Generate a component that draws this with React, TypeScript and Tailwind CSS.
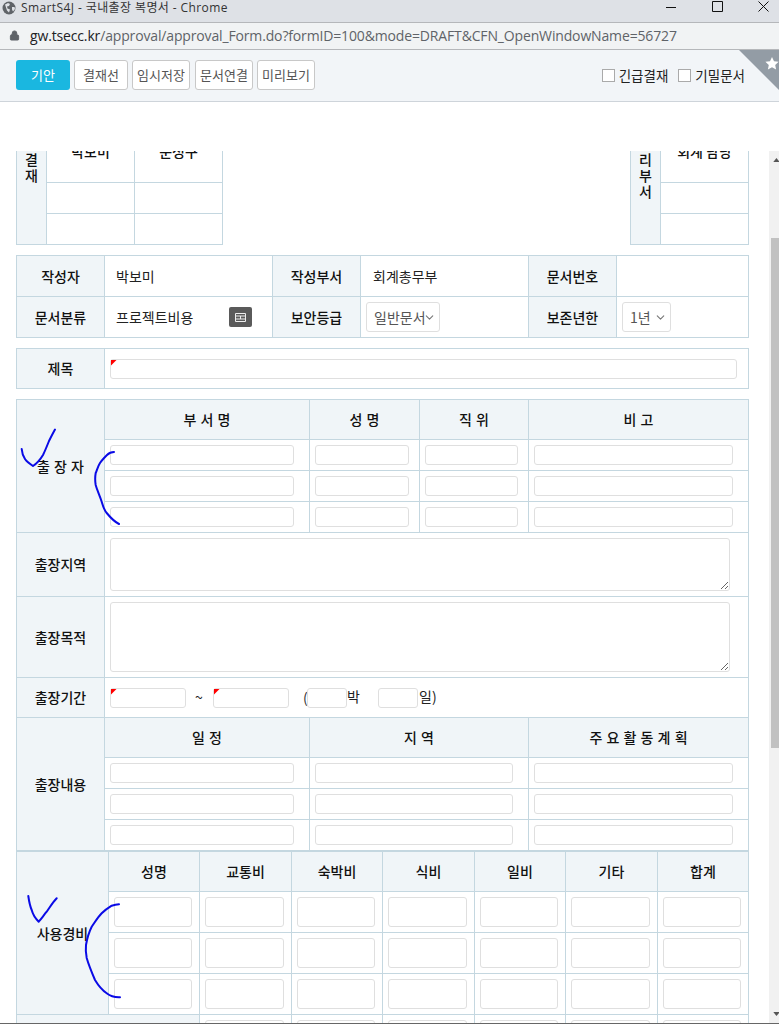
import { ChevronDown, Lock } from 'lucide-react'

const CELL = 'border border-[#c4d7e0]'
const LABEL = `${CELL} bg-[#f0f5f8] text-center font-medium text-[14px] text-[#111] [word-spacing:1px]`
const INPUT = 'block h-[20px] rounded-[3px] border border-[#dfdfdf] bg-white'

function Field({ w, required = false, className = '' }: { w: string; required?: boolean; className?: string }) {
  return (
    <span className={`relative block ${w} ${className}`}>
      <input className={`${INPUT} w-full`} />
      {required && <span className="absolute left-px top-px h-[6px] w-[6px] bg-[#f00] [clip-path:polygon(0_0,100%_0,0_100%)]" />}
    </span>
  )
}

function Picker({ value, w }: { value: string; w: string }) {
  return (
    <span className={`relative block ${w}`}>
      <select className="block h-[30px] w-full appearance-none rounded-[3px] border border-[#dfdfdf] bg-white pl-[7px] text-[14px] text-[#555]">
        <option>{value}</option>
      </select>
      <ChevronDown className="absolute right-[4px] top-[9px] h-[13px] w-[13px] text-[#777]" />
    </span>
  )
}

function Stroke({ d }: { d: string }) {
  return <path d={d} fill="none" stroke="#0a0ae6" strokeWidth="2" strokeLinecap="round" strokeLinejoin="round" />
}

function ApprovalBox({ label, names, cols }: { label: string; names: string[]; cols: string[] }) {
  return (
    <table className="table-fixed border-collapse" style={{ width: 30 + cols.reduce((a, c) => a + parseInt(c), 0) + 1 }}>
      <colgroup>
        <col className="w-[30px]" />
        {cols.map((c, i) => (
          <col key={i} style={{ width: parseInt(c) }} />
        ))}
      </colgroup>
      <tbody>
        <tr className="h-[28px]">
          <td rowSpan={4} className={`${LABEL} whitespace-pre-line px-[6px] pb-[3px] leading-[16px]`}>
            {label}
          </td>
          {names.map((_, i) => (
            <td key={i} className={CELL} />
          ))}
        </tr>
        <tr className="h-[62px]">
          {names.map((n) => (
            <td key={n} className={`${CELL} text-center text-[14px] font-medium text-[#111]`}>
              {n}
            </td>
          ))}
        </tr>
        {[0, 1].map((r) => (
          <tr key={r} className="h-[31px]">
            {names.map((n) => (
              <td key={n} className={CELL} />
            ))}
          </tr>
        ))}
      </tbody>
    </table>
  )
}

const TRIP_ROWS = [0, 1, 2]
const EXPENSE_HEADS = ['성명', '교통비', '숙박비', '식비', '일비', '기타', '합계']
const EXPENSE_COLS = [92, 91, 92, 91, 92, 91, 92, 91]

export default function App() {
  return (
    <div className="flex h-[1024px] w-[779px] flex-col overflow-hidden bg-white font-['Noto_Sans_CJK_KR',sans-serif] text-[#222]">
      {/* 창 제목 */}
      <div className="relative flex h-[23px] shrink-0 items-center border-b border-[#b5b7ba] bg-[#dee1e6] pl-[2px]">
        <svg viewBox="0 0 14 14" className="h-[14px] w-[14px] shrink-0 -translate-y-[3px]">
          <circle cx="7" cy="7" r="6.5" fill="#5f6368" />
          <path d="M3 3.5l3-1.5 2 1-1 2-2 .5.5 2 2.5 1-1 3-2-2-1-3zM10 6l2.5 0 .5 2-2 2.5-1-2z" fill="#dee1e6" />
        </svg>
        <span className="ml-[5px] -translate-y-[3px] font-['Open_Sans','Noto_Sans_CJK_KR',sans-serif] text-[12px] tracking-[0.4px] text-[#333]">
          SmartS4J - 국내출장 복명서 - Chrome
        </span>
        <svg viewBox="0 0 103 11" className="absolute left-[666px] top-[1px] h-[11px] w-[103px]" fill="none" stroke="#111">
          <path d="M0 6.5h10M46.5.5h10v10h-10zM92.5.5l10 10M102.5.5l-10 10" />
        </svg>
      </div>

      {/* 주소창 */}
      <div className="flex h-[27px] shrink-0 items-center border-b border-[#b5b7ba] bg-[#f1f3f4] pl-[9px]">
        <Lock className="h-[11px] w-[11px] -translate-y-px fill-[#5f6368] text-[#5f6368]" />
        <span className="ml-[10px] -translate-y-px font-['Open_Sans',sans-serif] text-[14px] tracking-[-0.15px] text-[#5f6368]">
          <span className="text-[#202124]">gw.tsecc.kr</span>
          /approval/approval_Form.do?formID=100&amp;mode=DRAFT&amp;CFN_OpenWindowName=56727
        </span>
      </div>

      {/* 버튼 영역 */}
      <div className="relative flex h-[52px] shrink-0 items-center gap-[4px] border-b border-[#ced4da] bg-[#f2f5f8] pl-[16px] pb-[1px] text-[13px]">
        <button className="h-[30px] w-[54px] rounded-[3px] bg-[#1ab7e0] text-white">기안</button>
        <button className="h-[30px] w-[54px] rounded-[3px] border border-[#c8c8c8] bg-white text-[#555]">결재선</button>
        <button className="h-[30px] w-[58px] rounded-[3px] border border-[#c8c8c8] bg-white text-[#555]">임시저장</button>
        <button className="ml-px h-[30px] w-[58px] rounded-[3px] border border-[#c8c8c8] bg-white text-[#555]">문서연결</button>
        <button className="h-[30px] w-[58px] rounded-[3px] border border-[#c8c8c8] bg-white text-[#555]">미리보기</button>
        <div className="ml-auto mr-[34px] flex items-center text-[13.5px] text-[#222]">
          <span className="h-[13px] w-[13px] border border-[#aaa] bg-white" />
          <span className="ml-[4px]">긴급결재</span>
          <span className="ml-[10px] h-[13px] w-[13px] border border-[#aaa] bg-white" />
          <span className="ml-[4px]">기밀문서</span>
        </div>
        <svg viewBox="0 0 40 40" className="absolute right-0 top-0 h-[40px] w-[40px]">
          <path d="M0 0H40V40z" fill="#939ca5" />
          <path d="M33 7l2 4.2 4.6.6-3.4 3.2.9 4.6-4.1-2.3-4.1 2.3.9-4.6-3.4-3.2 4.6-.6z" fill="#fff" />
        </svg>
      </div>

      <div className="h-[49px] shrink-0" />

      <div className="flex min-h-0 flex-1">
        <div className="relative min-w-0 flex-1 overflow-hidden">
          <div className="-mt-[59px] ml-[16px] w-[733px]">
            {/* 결재선 */}
            <div className="flex items-start justify-between">
              <ApprovalBox label={'결\n재'} names={['박보미', '문성구']} cols={['88', '88']} />
              <ApprovalBox label={'관\n리\n부\n서'} names={['회계 담당']} cols={['88']} />
            </div>

            {/* 문서 정보 */}
            <table className="mt-[10px] w-[733px] table-fixed border-collapse text-[14px]">
              <colgroup>
                <col className="w-[88px]" />
                <col className="w-[168px]" />
                <col className="w-[88px]" />
                <col className="w-[168px]" />
                <col className="w-[88px]" />
                <col className="w-[132px]" />
              </colgroup>
              <tbody>
                <tr className="h-[41px]">
                  <td className={LABEL}>작성자</td>
                  <td className={`${CELL} pl-[11px]`}>박보미</td>
                  <td className={LABEL}>작성부서</td>
                  <td className={`${CELL} pl-[12px]`}>회계총무부</td>
                  <td className={LABEL}>문서번호</td>
                  <td className={CELL} />
                </tr>
                <tr className="h-[41px]">
                  <td className={LABEL}>문서분류</td>
                  <td className={`${CELL} pl-[11px]`}>
                    <div className="flex items-center justify-between pr-[20px]">
                      프로젝트비용
                      <button className="flex h-[20px] w-[23px] items-center justify-center rounded-[2px] bg-[#5a5a5a]">
                        <svg viewBox="0 0 11 9" className="h-[9px] w-[11px]">
                          <path d="M.5.5h10v8H.5zM.5 3h10M.5 6h10M5.5 3v3" fill="none" stroke="#eee" />
                        </svg>
                      </button>
                    </div>
                  </td>
                  <td className={LABEL}>보안등급</td>
                  <td className={`${CELL} pl-[5px]`}>
                    <Picker value="일반문서" w="w-[74px]" />
                  </td>
                  <td className={LABEL}>보존년한</td>
                  <td className={`${CELL} pl-[5px]`}>
                    <Picker value="1년" w="w-[49px]" />
                  </td>
                </tr>
              </tbody>
            </table>

            {/* 제목 */}
            <table className="mt-[10px] w-[733px] table-fixed border-collapse">
              <colgroup>
                <col className="w-[88px]" />
                <col className="w-[644px]" />
              </colgroup>
              <tbody>
                <tr className="h-[40px]">
                  <td className={LABEL}>제목</td>
                  <td className={`${CELL} pl-[5px]`}>
                    <Field w="w-[627px]" required />
                  </td>
                </tr>
              </tbody>
            </table>

            {/* 출장 내역 */}
            <table className="mt-[10px] w-[733px] table-fixed border-collapse">
              <colgroup>
                <col className="w-[88px]" />
                <col className="w-[205px]" />
                <col className="w-[110px]" />
                <col className="w-[109px]" />
                <col className="w-[220px]" />
              </colgroup>
              <tbody>
                <tr className="h-[40px]">
                  <td rowSpan={4} className={LABEL}>
                    출 장 자
                  </td>
                  <td className={LABEL}>부 서 명</td>
                  <td className={LABEL}>성 명</td>
                  <td className={LABEL}>직 위</td>
                  <td className={LABEL}>비 고</td>
                </tr>
                {TRIP_ROWS.map((r) => (
                  <tr key={r} className="h-[31px]">
                    <td className={`${CELL} pl-[5px]`}>
                      <Field w="w-[184px]" />
                    </td>
                    <td className={`${CELL} pl-[5px]`}>
                      <Field w="w-[94px]" />
                    </td>
                    <td className={`${CELL} pl-[5px]`}>
                      <Field w="w-[93px]" />
                    </td>
                    <td className={`${CELL} pl-[5px]`}>
                      <Field w="w-[199px]" />
                    </td>
                  </tr>
                ))}
                <tr className="h-[64px]">
                  <td className={LABEL}>출장지역</td>
                  <td colSpan={4} className={`${CELL} pl-[5px]`}>
                    <textarea className="block h-[53px] w-[620px] rounded-[3px] border border-[#dfdfdf]" />
                  </td>
                </tr>
                <tr className="h-[81px]">
                  <td className={LABEL}>출장목적</td>
                  <td colSpan={4} className={`${CELL} pl-[5px]`}>
                    <textarea className="block h-[70px] w-[620px] rounded-[3px] border border-[#dfdfdf]" />
                  </td>
                </tr>
                <tr className="h-[40px]">
                  <td className={LABEL}>출장기간</td>
                  <td colSpan={4} className={`${CELL} pl-[5px]`}>
                    <div className="flex items-center text-[14px] text-[#222]">
                      <Field w="w-[76px]" required />
                      <span className="ml-[9px] w-[18px]">~</span>
                      <Field w="w-[76px]" required />
                      <span className="ml-[14px] w-[4px] text-[#333]">(</span>
                      <Field w="w-[40px]" />
                      <span className="w-[31px] -translate-y-px">박</span>
                      <Field w="w-[40px]" />
                      <span className="ml-px -translate-y-px">일)</span>
                    </div>
                  </td>
                </tr>
                <tr className="h-[40px]">
                  <td rowSpan={4} className={LABEL}>
                    출장내용
                  </td>
                  <td className={LABEL}>일 정</td>
                  <td colSpan={2} className={LABEL}>
                    지 역
                  </td>
                  <td className={LABEL}>주 요 활 동 계 획</td>
                </tr>
                {TRIP_ROWS.map((r) => (
                  <tr key={r} className="h-[31px]">
                    <td className={`${CELL} pl-[5px]`}>
                      <Field w="w-[184px]" />
                    </td>
                    <td colSpan={2} className={`${CELL} pl-[5px]`}>
                      <Field w="w-[198px]" />
                    </td>
                    <td className={`${CELL} pl-[5px]`}>
                      <Field w="w-[199px]" />
                    </td>
                  </tr>
                ))}
              </tbody>
            </table>

            {/* 사용경비 */}
            <table className="w-[733px] table-fixed border-collapse">
              <colgroup>
                {EXPENSE_COLS.map((w, i) => (
                  <col key={i} style={{ width: w }} />
                ))}
              </colgroup>
              <tbody>
                <tr className="h-[40px]">
                  <td rowSpan={4} className={LABEL}>
                    사용경비
                  </td>
                  {EXPENSE_HEADS.map((h) => (
                    <td key={h} className={LABEL}>
                      {h}
                    </td>
                  ))}
                </tr>
                {[0, 1, 2].map((r) => (
                  <tr key={r} className="h-[41px]">
                    {EXPENSE_HEADS.map((h) => (
                      <td key={h} className={`${CELL} pl-[5px] pr-[7px]`}>
                        <input className={`${INPUT} h-[30px] w-full`} />
                      </td>
                    ))}
                  </tr>
                ))}
                <tr className="h-[41px]">
                  <td colSpan={2} className={LABEL} />
                  {EXPENSE_HEADS.slice(1).map((h) => (
                    <td key={h} className={`${CELL} pl-[5px] pr-[7px]`}>
                      <input className={`${INPUT} h-[30px] w-full`} />
                    </td>
                  ))}
                </tr>
              </tbody>
            </table>
          </div>

          {/* 펜 표시 */}
          <svg className="pointer-events-none absolute left-0 top-0 h-[872px] w-[769px]" viewBox="0 151 769 872">
            <Stroke d="M55 429.5C53 433 51 437 49 441C47 446 45 451 43 455C40 460 36 464 33 466C30 464 27 462 25 459C23 456 22 453 21.7 449" />
            <Stroke d="M114 452C111 452 109 453 107 455C104 458 102 460 100 463C98 466 97 470 95.7 473C95 477 95 481 95.7 485C97 490 100 496 101.7 501.7C103 506 104 510 106.7 513C110 517 115 522 119 524" />
            <Stroke d="M28.3 896C29 901 30 906 31.7 910C33 915 36 919 38.7 921.7C41 919 44 915 46.7 911.7C50 907 53 902 56.7 898.3" />
            <Stroke d="M119 904.3C116 904.5 114 905 111.7 905.7C108 908 105 910 101.7 913.3C98 917 95 922 91.7 926.7C89 932 87 939 86 945C85.5 949 86 954 86.7 958C89 966 92 973 95 980C98 985 102 990 106.7 993.3C110 996 115 997.5 120 997.3" />
          </svg>
        </div>

        {/* 스크롤바 */}
        <div className="flex w-[10px] shrink-0 flex-col bg-[#f1f1f1] pl-[2px]">
          <svg viewBox="0 0 8 5" className="mt-[7px] h-[4px] w-[7px] shrink-0 translate-x-[2px]">
            <path d="M4 0L8 5H0z" fill="#555" />
          </svg>
          <div className="mt-[76px] h-[510px] w-full shrink-0 bg-[#c1c1c1]" />
          <svg viewBox="0 0 8 5" className="mt-auto mb-[7px] h-[4px] w-[7px] shrink-0 translate-x-[2px]">
            <path d="M0 0H8L4 5z" fill="#555" />
          </svg>
        </div>
      </div>

      <div className="h-px shrink-0 bg-[#666]" />
    </div>
  )
}
